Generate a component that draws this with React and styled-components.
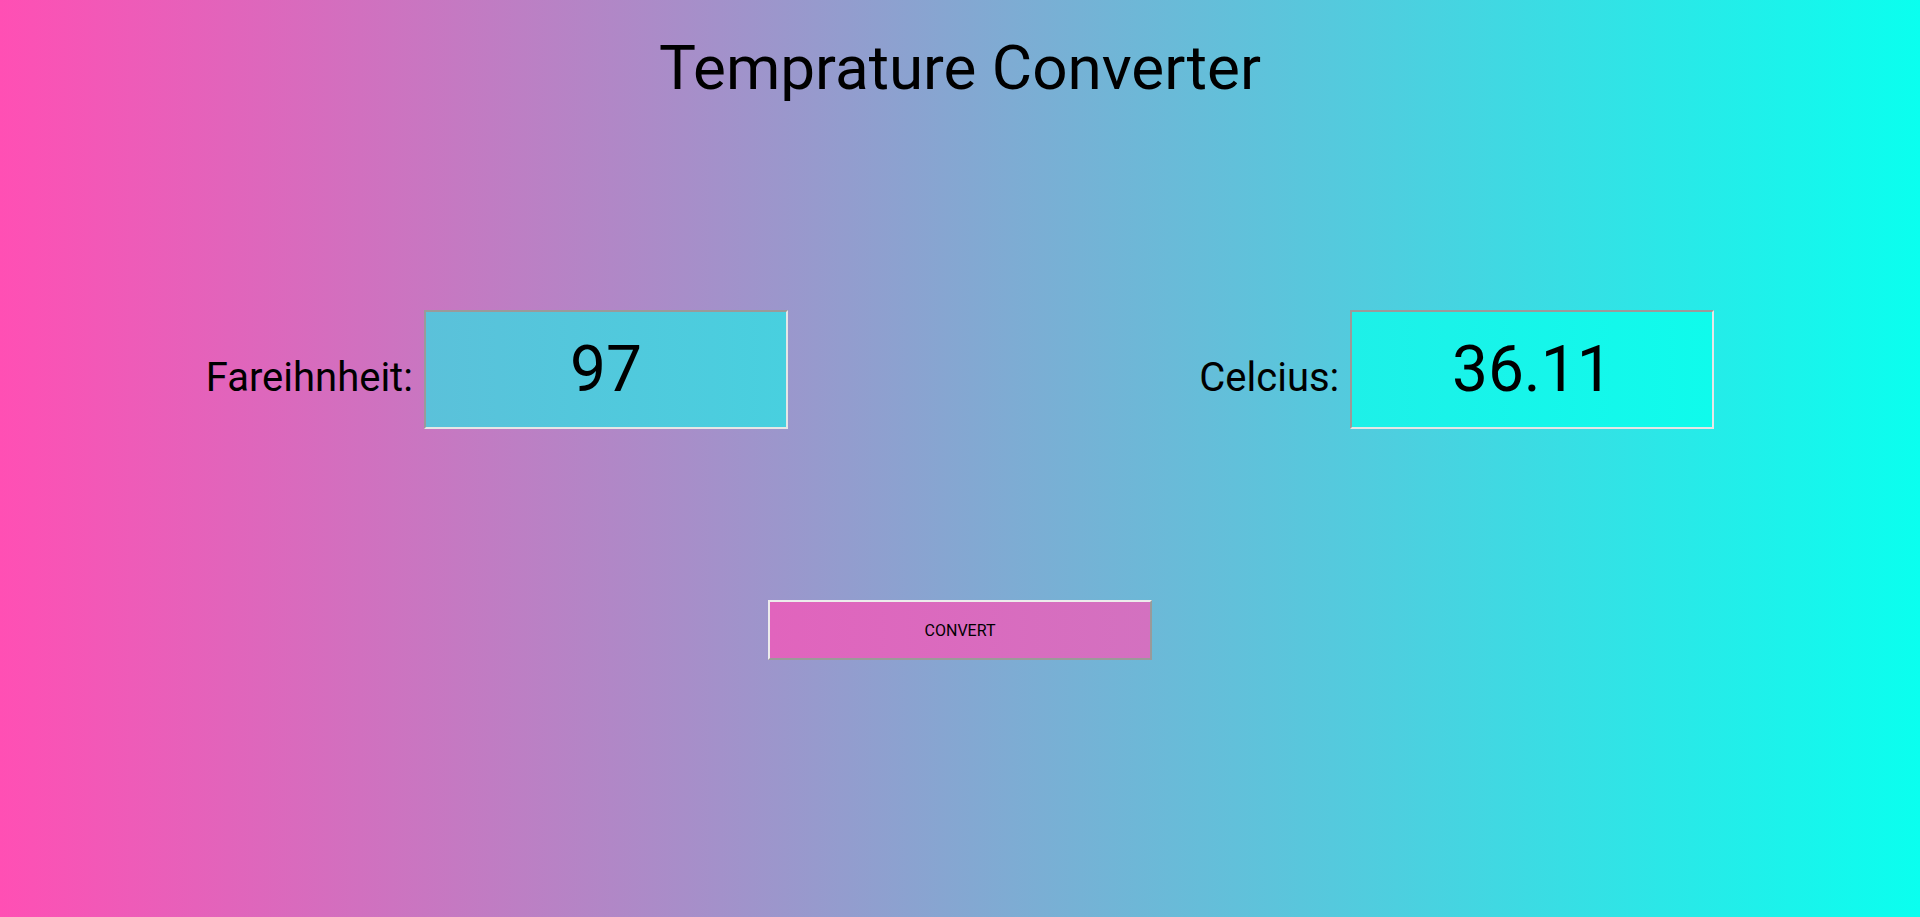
import React, { useState } from 'react'
import styled, { createGlobalStyle } from 'styled-components'

const GlobalStyle = createGlobalStyle`
  * {
    box-sizing: border-box;
  }
  body {
    margin: 0;
    font-family: Roboto, "Liberation Sans", Arial, sans-serif;
  }
`

const App = () => {
  const [fahrenheit, setFahrenheit] = useState('97')
  const [celsius, setCelsius] = useState('36.11')

  const convert = () => {
    const f = parseFloat(fahrenheit)
    if (isNaN(f)) return
    setCelsius((((f - 32) * 5) / 9).toFixed(2))
  }

  return (
    <Page>
      <GlobalStyle />
      <Title>Temprature Converter</Title>
      <Row>
        <Field>
          <Label htmlFor="fahrenheit">Fareihnheit:</Label>
          <TempInput
            id="fahrenheit"
            $from="#5bc1da"
            $to="#48d0df"
            value={fahrenheit}
            onChange={(e) => setFahrenheit(e.target.value)}
          />
        </Field>
        <Field>
          <Label htmlFor="celsius">Celcius:</Label>
          <TempInput
            id="celsius"
            $from="#1ef0e8"
            $to="#0ffbec"
            value={celsius}
            onChange={(e) => setCelsius(e.target.value)}
          />
        </Field>
      </Row>
      <ConvertButton onClick={convert}>CONVERT</ConvertButton>
    </Page>
  )
}

export default App

const Page = styled.div`
  min-height: 100vh;
  display: flex;
  flex-direction: column;
  background: linear-gradient(to right, #ff4fb4, #0affef);
  color: #000;
`

const Title = styled.h1`
  margin: 0;
  padding-top: 31px;
  font-size: 62px;
  font-weight: 400;
  text-align: center;
`

const Row = styled.div`
  display: flex;
  justify-content: space-around;
  margin-top: 206px;
`

const Field = styled.div`
  display: flex;
  align-items: baseline;
  gap: 11px;
`

const Label = styled.label`
  font-size: 40px;
`

const TempInput = styled.input`
  width: 364px;
  height: 119px;
  font-family: Roboto, "Liberation Sans", Arial, sans-serif;
  font-size: 64px;
  text-align: center;
  color: #000;
  background: linear-gradient(to right, ${(p) => p.$from}, ${(p) => p.$to});
  border: 2px solid;
  border-color: #9a9a9a #e6e6e6 #e6e6e6 #9a9a9a;
  outline: none;
  padding: 0;
`

const ConvertButton = styled.button`
  width: 384px;
  height: 60px;
  margin: 171px auto 0;
  font-family: Roboto, "Liberation Sans", Arial, sans-serif;
  font-size: 16px;
  color: #000;
  background: linear-gradient(to right, #e164bd, #d371c0);
  border: 2px solid;
  border-color: #ececec #9a9a9a #9a9a9a #ececec;
  cursor: pointer;
`
